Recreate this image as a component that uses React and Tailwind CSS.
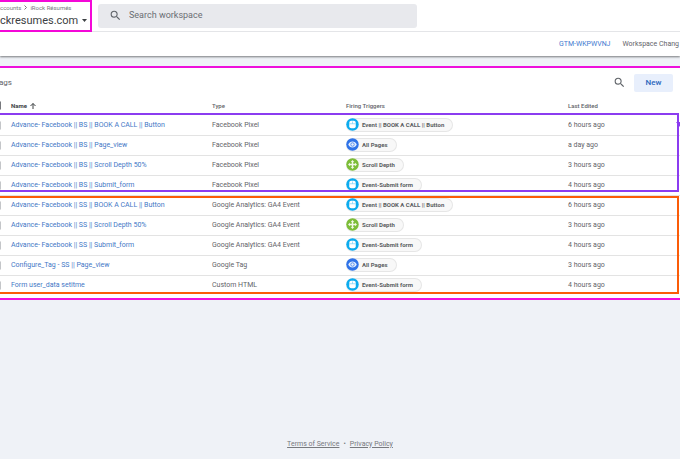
import React from "react";

const EVENT = { kind: "click", label: "Event || BOOK A CALL || Button" };
const PAGES = { kind: "view", label: "All Pages" };
const SCROLL = { kind: "scroll", label: "Scroll Depth" };
const SUBMIT = { kind: "click", label: "Event-Submit form" };

const tags = [
  { name: "Advance- Facebook || BS || BOOK A CALL || Button", type: "Facebook Pixel", trigger: EVENT, edited: "6 hours ago" },
  { name: "Advance- Facebook || BS || Page_view", type: "Facebook Pixel", trigger: PAGES, edited: "a day ago" },
  { name: "Advance- Facebook || BS || Scroll Depth 50%", type: "Facebook Pixel", trigger: SCROLL, edited: "3 hours ago" },
  { name: "Advance- Facebook || BS || Submit_form", type: "Facebook Pixel", trigger: SUBMIT, edited: "4 hours ago" },
  { name: "Advance- Facebook || SS || BOOK A CALL || Button", type: "Google Analytics: GA4 Event", trigger: EVENT, edited: "6 hours ago" },
  { name: "Advance- Facebook || SS || Scroll Depth 50%", type: "Google Analytics: GA4 Event", trigger: SCROLL, edited: "3 hours ago" },
  { name: "Advance- Facebook || SS || Submit_form", type: "Google Analytics: GA4 Event", trigger: SUBMIT, edited: "4 hours ago" },
  { name: "Configure_Tag - SS || Page_view", type: "Google Tag", trigger: PAGES, edited: "3 hours ago" },
  { name: "Form user_data setitme", type: "Custom HTML", trigger: SUBMIT, edited: "4 hours ago" },
];

function SearchIcon({ className }) {
  return (
    <svg viewBox="0 0 24 24" className={className} fill="currentColor" aria-hidden="true">
      <path d="M15.5 14h-.79l-.28-.27A6.47 6.47 0 0 0 16 9.5 6.5 6.5 0 1 0 9.5 16c1.61 0 3.09-.59 4.23-1.57l.27.28v.79l5 4.99L20.49 19l-4.99-5zm-6 0C7.01 14 5 11.99 5 9.5S7.01 5 9.5 5 14 7.01 14 9.5 11.99 14 9.5 14z" />
    </svg>
  );
}

function TriggerIcon({ kind }) {
  if (kind === "view") {
    return (
      <svg viewBox="0 0 26 26" className="size-[13px] shrink-0" aria-hidden="true">
        <circle cx="13" cy="13" r="12.5" fill="#2f73e8" />
        <path d="M4.5 13c1.600-3.700 4.800-6 8.500-6s6.900 2.300 8.500 6c-1.600 3.700-4.800 6-8.500 6s-6.900-2.300-8.500-6z" fill="#e6effd" />
        <circle cx="13" cy="13" r="3.500" fill="#e6effd" stroke="#2f73e8" strokeWidth="1.400" />
      </svg>
    );
  }
  if (kind === "scroll") {
    return (
      <svg viewBox="0 0 26 26" className="size-[13px] shrink-0" aria-hidden="true">
        <circle cx="13" cy="13" r="12.5" fill="#7cbd38" />
        <path d="M13 4l3.500 4h-2v3.500H18V9.500l4 3.500-4 3.500v-2h-3.500V18h2L13 22l-3.500-4h2v-3.500H8v2L4 13l4-3.500v2h3.500V8h-2z" fill="#f1f8e8" />
      </svg>
    );
  }
  return (
    <svg viewBox="0 0 26 26" className="size-[13px] shrink-0" aria-hidden="true">
      <circle cx="13" cy="13" r="12.5" fill="#0cabee" />
      <rect x="6.500" y="5.500" width="13" height="15" rx="4" fill="#fff" />
      <path d="M7 11.500h12M13 7v4" stroke="#0cabee" strokeWidth="0.800" />
    </svg>
  );
}

function TriggerChip({ trigger }) {
  return (
    <span className="flex h-[14px] w-fit items-center gap-[3px] rounded-full border border-l-0 border-[#e6e6e6] bg-[#f8f8f8] pr-2 text-[6px] font-bold text-[#5a5d61]">
      <TriggerIcon kind={trigger.kind} />
      {trigger.label}
    </span>
  );
}

export default function App() {
  return (
    <div className="relative flex min-h-screen flex-col overflow-hidden bg-[#eff2f7] font-['Roboto',sans-serif] text-[7px] text-[#5f6368]">
      <header className="relative bg-white shadow-[0_1px_2px_rgba(0,0,0,0.5)]">
        <div className="flex h-8 items-center border-b border-[#e4e5e8]">
          <div className="h-8 w-[92px] shrink-0 border-y-2 border-r-2 border-[#f408d8]">
            <nav className="flex h-3 items-center gap-[3px] text-[6px] whitespace-nowrap text-[#77797d]" aria-label="Account">
              <span>ccounts</span>
              <svg viewBox="0 0 6 8" className="h-[5px] w-[3px]" fill="none" stroke="currentColor" strokeWidth="2" aria-hidden="true">
                <path d="M1 0l4 4-4 4" />
              </svg>
              <span>iRock Résumés</span>
            </nav>
            <button className="flex h-[14px] items-center gap-1 text-[11px] leading-none whitespace-nowrap text-[#3c4043]">
              ckresumes.com
              <svg viewBox="0 0 10 6" className="h-[3px] w-[5px]" fill="currentColor" aria-hidden="true">
                <path d="M0 0h10L5 6z" />
              </svg>
            </button>
          </div>
          <label className="ml-[6px] flex h-6 w-[319px] items-center gap-[7px] rounded-[3px] bg-[#e8e9ed] pl-[11px]">
            <SearchIcon className="size-[13px]" />
            <input
              type="text"
              aria-label="Search workspace"
              placeholder="Search workspace"
              className="min-w-0 flex-1 bg-transparent text-[9px] outline-none placeholder:text-[#6b6e73]"
            />
          </label>
        </div>
        <div className="flex h-6 items-center justify-end gap-3 pr-px whitespace-nowrap">
          <a href="#container" className="text-[#3f7ad0]">GTM-WKPWVNJ</a>
          <span>Workspace Chang</span>
        </div>
      </header>

      <main className="relative mt-[10px] border-y-2 border-[#ee10dc] bg-white pb-[2px]">
        <div className="flex h-[29px] items-center pr-[7px]">
          <h1 className="-ml-px flex-1 text-[8px]">ags</h1>
          <button aria-label="Search tags" className="mr-2">
            <SearchIcon className="size-[13px]" />
          </button>
          <button className="h-[18px] w-[39px] rounded-[2px] bg-[#e8effc] text-[8px] font-medium text-[#2a66bd]">New</button>
        </div>
        <table className="w-full table-fixed border-separate border-spacing-0 text-left whitespace-nowrap">
          <thead>
            <tr className="h-[19px] text-[6px] *:p-0 *:pb-[2px]">
              <th className="w-[11px]">
                <input type="checkbox" aria-label="Select all tags" className="-ml-2 block size-[9px] appearance-none rounded-[1px] border border-[#77797d]" />
              </th>
              <th className="w-[201px] font-bold text-[#3c4043]">
                <span className="flex items-center gap-[3px]">
                  Name
                  <svg viewBox="0 0 12 12" className="size-[6px]" fill="none" stroke="currentColor" strokeWidth="2" aria-hidden="true">
                    <path d="M6 12V1M1 6l5-5 5 5" />
                  </svg>
                </span>
              </th>
              <th className="w-[134px] font-medium">Type</th>
              <th className="w-[222px] font-medium">Firing Triggers</th>
              <th className="font-medium">Last Edited</th>
            </tr>
          </thead>
          <tbody>
            {tags.map((tag) => (
              <tr key={tag.name} className="h-5 *:border-b *:border-[#e3e3e3] last:*:border-transparent">
                <td className="p-0">
                  <input type="checkbox" aria-label={"Select " + tag.name} className="-ml-2 block size-[9px] appearance-none rounded-[1px] border border-[#c4c6c9]" />
                </td>
                <td className="p-0">
                  <a href="#tag" className="text-[#3f78c6]">{tag.name}</a>
                </td>
                <td className="p-0">{tag.type}</td>
                <td className="p-0 pb-[2px]">
                  <TriggerChip trigger={tag.trigger} />
                </td>
                <td className="p-0">{tag.edited}</td>
              </tr>
            ))}
          </tbody>
        </table>

        <div className="pointer-events-none absolute top-[45px] right-px left-0 h-[79px] border-y-2 border-r-2 border-[#8b3cf0]">
          <svg viewBox="0 0 4 6" className="absolute top-[6px] -right-[3px] h-[6px] w-1" fill="#8b3cf0" aria-hidden="true">
            <path d="M0 1h4v5z" />
          </svg>
        </div>
        <div className="pointer-events-none absolute right-px bottom-1 left-0 h-[98px] border-y-2 border-r-2 border-[#fb5c08]" />
      </main>

      <footer className="mt-auto flex items-center justify-center gap-1 pb-[10px] text-[#77797d]">
        <a href="#terms" className="underline">Terms of Service</a>
        <span>•</span>
        <a href="#privacy" className="underline">Privacy Policy</a>
      </footer>
    </div>
  );
}
